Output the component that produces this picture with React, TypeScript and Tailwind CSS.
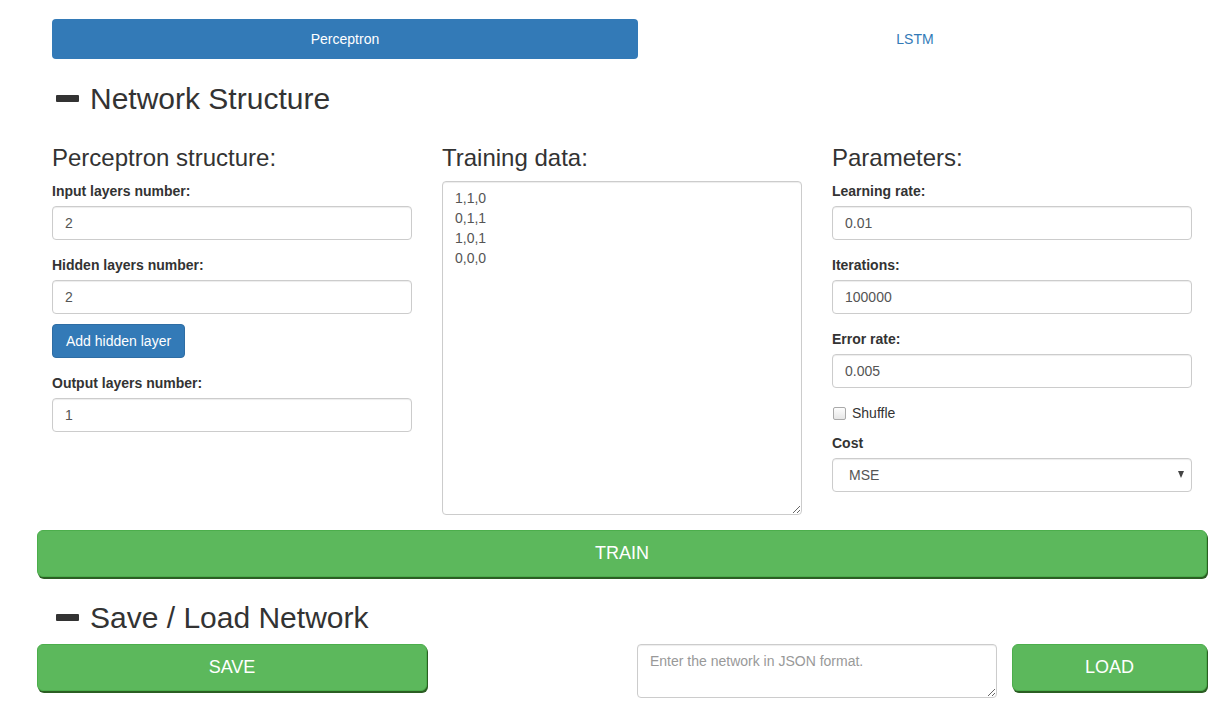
import React from "react";

const inputCls =
  "block w-full h-[34px] px-3 text-[14px] text-[#555] bg-white border border-[#ccc] rounded-[4px] shadow-[inset_0_1px_1px_rgba(0,0,0,0.075)] outline-none";

function Field({ label, value }: { label: string; value: string }) {
  return (
    <div className="mb-[15px]">
      <label className="block font-bold leading-5 mb-[5px]">{label}</label>
      <input className={inputCls} defaultValue={value} />
    </div>
  );
}

function Minus() {
  return <span className="inline-block w-[23px] h-[7px] bg-[#333] rounded-[1px] mr-[11px] ml-[4px]" />;
}

const greenBtn =
  "bg-[#5cb85c] border border-[#4cae4c] rounded-[6px] text-white text-[18px] shadow-[1px_2px_0_#2b5e23] flex items-center justify-center";

export default function App() {
  return (
    <div
      className="w-[1231px] h-[712px] bg-white text-[#333] text-[14px] overflow-hidden"
      style={{ fontFamily: '"Liberation Sans", Arial, sans-serif' }}
    >
      <div className="w-[1170px] ml-[37px]">
        {/* tabs */}
        <div className="px-[15px] pt-[19px] flex">
          <div className="w-[586px] h-10 rounded-[4px] bg-[#337ab7] text-white flex items-center justify-center">
            Perceptron
          </div>
          <div className="flex-1 h-10 flex items-center justify-center text-[#337ab7]">LSTM</div>
        </div>

        {/* Network Structure */}
        <h2 className="px-[15px] mt-[23px] mb-[10px] text-[30px] leading-[33px] font-normal flex items-center">
          <Minus />
          Network Structure
        </h2>

        <div className="grid grid-cols-3">
          <div className="px-[15px]">
            <h3 className="mt-[20px] mb-[10px] text-[24px] leading-[26.4px] font-normal">Perceptron structure:</h3>
            <Field label="Input layers number:" value="2" />
            <div className="mb-[15px]">
              <label className="block font-bold leading-5 mb-[5px]">Hidden layers number:</label>
              <input className={inputCls} defaultValue="2" />
              <button className="mt-[10px] h-[34px] px-[13px] bg-[#337ab7] border border-[#2e6da4] rounded-[4px] text-white text-[14px]">
                Add hidden layer
              </button>
            </div>
            <Field label="Output layers number:" value="1" />
          </div>

          <div className="px-[15px]">
            <h3 className="mt-[20px] mb-[10px] text-[24px] leading-[26.4px] font-normal">Training data:</h3>
            <textarea
              className="block w-full h-[334px] px-3 py-[6px] text-[14px] leading-5 text-[#555] border border-[#ccc] rounded-[4px] shadow-[inset_0_1px_1px_rgba(0,0,0,0.075)] outline-none"
              defaultValue={"1,1,0\n0,1,1\n1,0,1\n0,0,0"}
            />
          </div>

          <div className="px-[15px]">
            <h3 className="mt-[20px] mb-[10px] text-[24px] leading-[26.4px] font-normal">Parameters:</h3>
            <Field label="Learning rate:" value="0.01" />
            <Field label="Iterations:" value="100000" />
            <Field label="Error rate:" value="0.005" />
            <div className="flex items-center h-5 mb-[10px]">
              <span className="w-[13px] h-[13px] ml-[1px] border border-[#a9a9a9] rounded-[2px] bg-gradient-to-b from-[#fdfdfd] to-[#e6e6e6]" />
              <span className="ml-[6px]">Shuffle</span>
            </div>
            <div className="mb-[15px]">
              <label className="block font-bold leading-5 mb-[5px]">Cost</label>
              <div className="relative">
                <select className={inputCls + " appearance-none pl-4"} defaultValue="MSE">
                  <option>MSE</option>
                  <option>Cross Entropy</option>
                </select>
                <span className="absolute right-[8px] top-[13px] w-0 h-0 border-l-[3.5px] border-r-[3.5px] border-t-[7px] border-l-transparent border-r-transparent border-t-[#444]" />
              </div>
            </div>
          </div>
        </div>

        {/* Train */}
        <button className={greenBtn + " w-full h-[47px] mt-[15px]"}>TRAIN</button>

        {/* Save / Load */}
        <h2 className="px-[15px] mt-[24px] mb-[10px] text-[30px] leading-[33px] font-normal flex items-center">
          <Minus />
          Save / Load Network
        </h2>

        <div className="flex items-start">
          <button className={greenBtn + " w-[390px] h-[47px]"}>SAVE</button>
          <div className="w-[195px]" />
          <div className="w-[390px] px-[15px]">
            <textarea
              className="block w-full h-[54px] px-3 py-[6px] text-[14px] leading-5 text-[#555] placeholder:text-[#999] border border-[#ccc] rounded-[4px] shadow-[inset_0_1px_1px_rgba(0,0,0,0.075)] outline-none"
              placeholder="Enter the network in JSON format."
            />
          </div>
          <button className={greenBtn + " w-[195px] h-[47px]"}>LOAD</button>
        </div>
      </div>
    </div>
  );
}
